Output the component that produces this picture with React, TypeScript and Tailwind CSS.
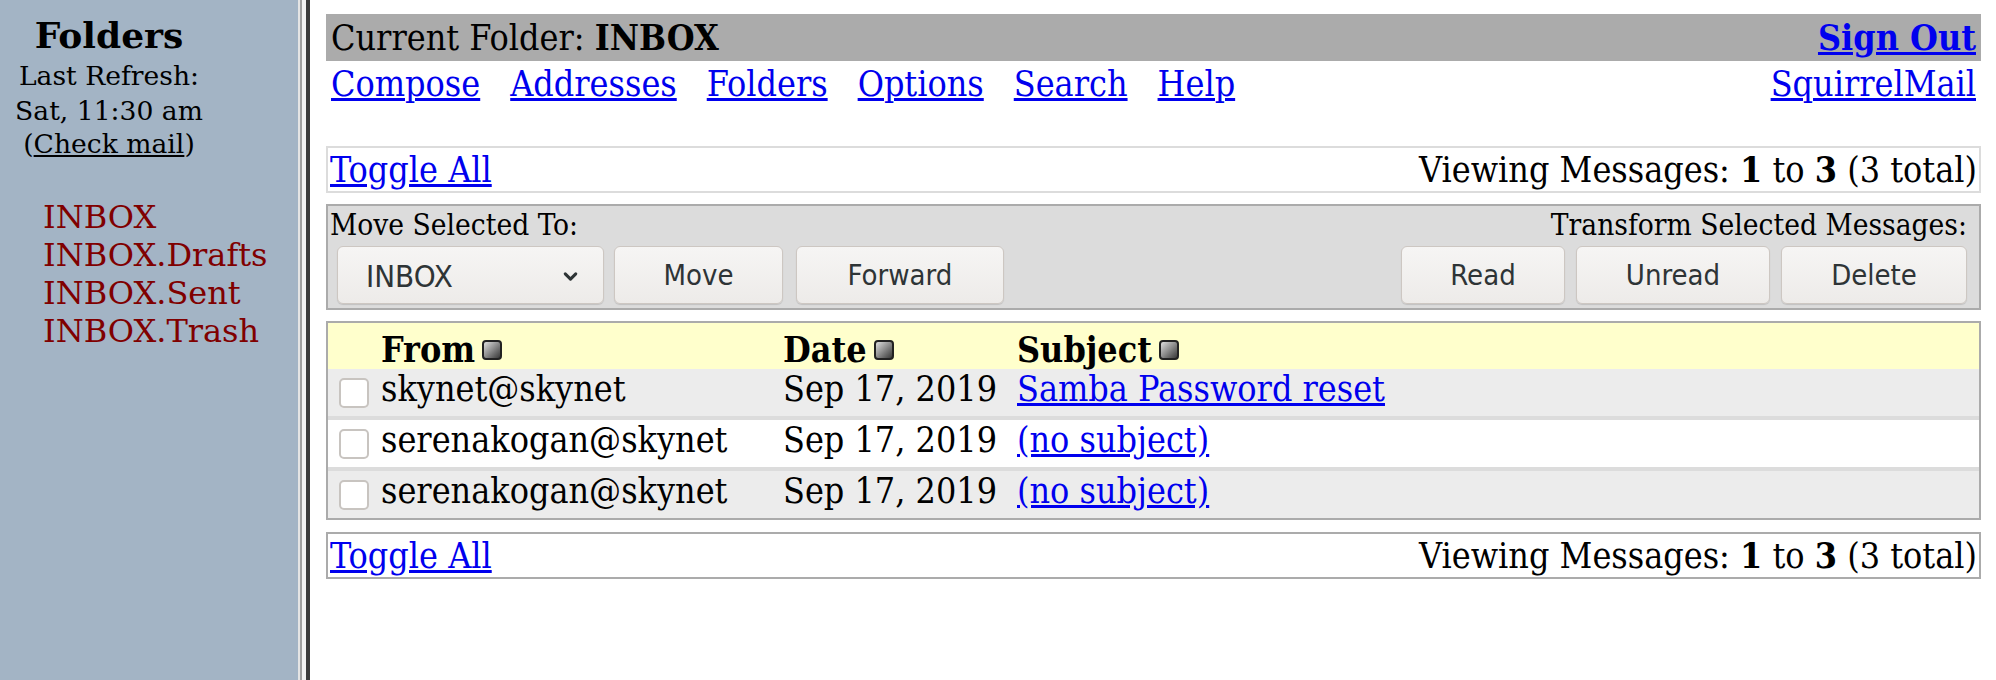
import { ChevronDown } from 'lucide-react';

const serif = { fontFamily: '"DejaVu Serif", serif' };
const condensed = { fontFamily: '"DejaVu Serif Condensed", "DejaVu Serif", serif', fontStretch: 'condensed' };
const btnFont = { fontFamily: '"DejaVu Sans Condensed", "DejaVu Sans", sans-serif', fontStretch: 'condensed' };

const folders = ['INBOX', 'INBOX.Drafts', 'INBOX.Sent', 'INBOX.Trash'];

const messages = [
  { from: 'skynet@skynet', date: 'Sep 17, 2019', subject: 'Samba Password reset' },
  { from: 'serenakogan@skynet', date: 'Sep 17, 2019', subject: '(no subject)' },
  { from: 'serenakogan@skynet', date: 'Sep 17, 2019', subject: '(no subject)' },
];

const SortIcon = () => (
  <span className="inline-block w-[20px] h-[20px] ml-[7px] rounded-[4px] border-2 border-[#222] bg-gradient-to-br from-[#e0e0e0] via-[#8c8c8c] to-[#3a3a3a]" />
);

const Btn = ({ label, className }: { label: string; className: string }) => (
  <button
    className={`h-[58px] pt-[2px] rounded-[6px] border border-[#cdc7c2] bg-gradient-to-b from-[#f6f5f4] to-[#edebe9] text-[#2e3436] text-[29px] shadow-[0_1px_1px_rgba(0,0,0,0.12)] ${className}`}
    style={btnFont}
  >
    {label}
  </button>
);

const ToggleBar = ({ border }: { border: string }) => (
  <div className={`h-[47px] border-2 ${border} flex items-center justify-between px-[2px] text-[35.6px]`}>
    <a href="#" className="text-[#0000ee] underline">Toggle All</a>
    <span className="text-black">
      Viewing Messages: <b>1</b> to <b>3</b> (3 total)
    </span>
  </div>
);

export default function App() {
  return (
    <div className="flex h-screen w-full overflow-hidden bg-white" style={serif}>
      {/* left frame */}
      <div className="w-[298px] h-full bg-[#a3b4c5] shrink-0">
        <div className="w-[218px] flex flex-col items-center pt-[12px] text-black">
          <div className="text-[36px] font-bold leading-[46px]">Folders</div>
          <div className="text-[26.6px] leading-[36px]">Last Refresh:</div>
          <div className="text-[26.6px] leading-[34px]">Sat, 11:30 am</div>
          <div className="text-[26.6px] leading-[32px]">
            (<a href="#" className="underline text-black">Check mail</a>)
          </div>
        </div>
        <div className="pl-[43px] pt-[38px] flex flex-col">
          {folders.map((f) => (
            <a key={f} href="#" className="text-[32px] leading-[38px] text-[#800000]">{f}</a>
          ))}
        </div>
      </div>
      {/* frame border */}
      <div className="w-[2px] h-full bg-[#e4e4e4]" />
      <div className="w-[2px] h-full bg-[#a0a0a0]" />
      <div className="w-[4px] h-full bg-[#f2f2f2]" />
      <div className="w-[4px] h-full bg-[#3c3c3c]" />

      {/* main frame */}
      <div className="flex-1 pt-[14px] pl-[16px] pr-[15px] text-black" style={condensed}>
        <div className="h-[47px] bg-[#ababab] flex items-center justify-between px-[5px] text-[35.6px]">
          <span>Current Folder: <b>INBOX</b></span>
          <a href="#" className="font-bold text-[#0000ee] underline">Sign Out</a>
        </div>
        <div className="h-[46px] flex items-center justify-between px-[5px] text-[35.6px]">
          <div className="flex gap-[30px]">
            {['Compose', 'Addresses', 'Folders', 'Options', 'Search', 'Help'].map((l) => (
              <a key={l} href="#" className="text-[#0000ee] underline">{l}</a>
            ))}
          </div>
          <a href="#" className="text-[#0000ee] underline">SquirrelMail</a>
        </div>

        <div className="mt-[39px]">
          <ToggleBar border="border-[#dcdcdc]" />
        </div>

        <div className="mt-[11px] h-[106px] border-2 border-[#ababab] bg-[#dcdcdc] flex justify-between pl-[9px] pr-[12px]">
          <div className="flex flex-col">
            <div className="text-[29.6px] leading-[34px] -ml-[7px] pt-[2px]">Move Selected To:</div>
            <div className="flex gap-[10px] mt-[4px]">
              <div
                className="w-[267px] h-[58px] pt-[2px] rounded-[6px] border border-[#cdc7c2] bg-gradient-to-b from-[#f6f5f4] to-[#edebe9] text-[#2e3436] text-[31px] flex items-center justify-between pl-[28px] pr-[22px] shadow-[0_1px_1px_rgba(0,0,0,0.12)]"
                style={btnFont}
              >
                <span>INBOX</span>
                <ChevronDown className="w-[21px] h-[21px]" strokeWidth={3.5} />
              </div>
              <Btn label="Move" className="w-[169px]" />
              <Btn label="Forward" className="w-[208px] ml-[3px]" />
            </div>
          </div>
          <div className="flex flex-col items-end">
            <div className="text-[29.6px] leading-[34px] pt-[2px]">Transform Selected Messages:</div>
            <div className="flex gap-[11px] mt-[4px]">
              <Btn label="Read" className="w-[164px]" />
              <Btn label="Unread" className="w-[194px]" />
              <Btn label="Delete" className="w-[186px]" />
            </div>
          </div>
        </div>

        <div className="mt-[11px] border-2 border-[#ababab] text-[35.6px]">
          <div className="h-[46px] bg-[#ffffcc] grid grid-cols-[42px_402px_234px_1fr] pl-[11px] items-center font-bold">
            <div />
            <div className="flex items-center">From<SortIcon /></div>
            <div className="flex items-center">Date<SortIcon /></div>
            <div className="flex items-center">Subject<SortIcon /></div>
          </div>
          {messages.map((m, i) => (
            <div key={i}>
              {i > 0 && <div className="h-[4px] bg-[#dcdcdc]" />}
              <div
                className={`h-[47px] grid grid-cols-[42px_402px_234px_1fr] pl-[11px] items-center ${i % 2 === 0 ? 'bg-[#ececec]' : 'bg-white'}`}
              >
                <div>
                  <span className="block w-[30px] h-[30px] rounded-[5px] border-2 border-[#c8c4c0] bg-white" />
                </div>
                <div className="-mt-[7px]">{m.from}</div>
                <div className="-mt-[7px]">{m.date}</div>
                <div className="-mt-[7px]">
                  <a href="#" className="text-[#0000ee] underline">{m.subject}</a>
                </div>
              </div>
            </div>
          ))}
        </div>

        <div className="mt-[12px]">
          <ToggleBar border="border-[#ababab]" />
        </div>
      </div>
    </div>
  );
}
